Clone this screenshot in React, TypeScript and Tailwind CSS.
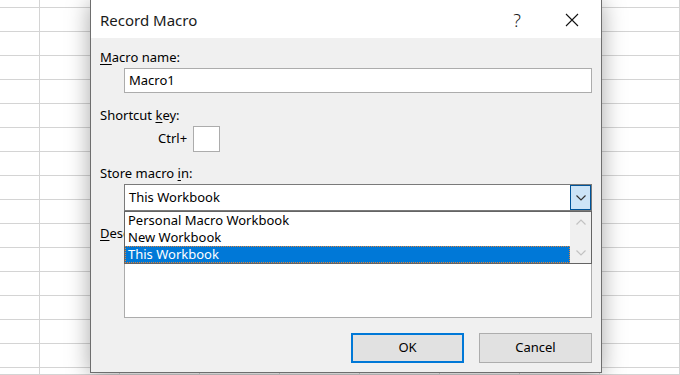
import React from "react";

const COLS = [40, 80, 80, 80, 80, 80, 80, 80, 80];
const ROWS = [8, ...Array.from({ length: 15 }, () => 24), 7];

const font = "font-['Segoe_UI','Noto_Sans',sans-serif]";

function Sheet() {
  return (
    <div className="flex flex-col">
      {ROWS.map((h, r) => (
        <div key={r} className="flex" style={{ height: h }}>
          {COLS.map((w, c) => (
            <div
              key={c}
              className="shrink-0 border-r border-b border-[#d4d4d4] bg-white"
              style={{ width: w }}
            />
          ))}
        </div>
      ))}
    </div>
  );
}

function Chevron({ up = false, color }: { up?: boolean; color: string }) {
  return (
    <svg width="10" height="6" viewBox="0 0 10 6" className="block">
      <path
        d={up ? "M0.5 5.5 L5 1 L9.5 5.5" : "M0.5 0.5 L5 5 L9.5 0.5"}
        fill="none"
        stroke={color}
        strokeWidth="1.2"
      />
    </svg>
  );
}

function Label({ children }: { children: React.ReactNode }) {
  return <div className="h-[18px] leading-[18px] text-[13px] text-black">{children}</div>;
}

function DropList() {
  const items = ["Personal Macro Workbook", "New Workbook", "This Workbook"];
  return (
    <div className="absolute left-[-1px] top-[26px] z-10 flex w-[468px] border border-[#646464] bg-white">
      <div className="flex flex-1 flex-col">
        {items.map((it, i) => (
          <div
            key={it}
            className={
              i === 2
                ? "h-[17px] border border-dotted border-[#e0843a] bg-[#0078d7] pl-[2px] text-[13px] leading-[15px] text-white"
                : "h-[17px] pl-[3px] text-[13px] leading-[17px] text-black"
            }
          >
            {it}
          </div>
        ))}
      </div>
      <div className="flex w-[21px] flex-col items-center justify-between bg-[#f0f0f0] pb-[7px] pt-[7px]">
        <Chevron up color="#c2c2c2" />
        <Chevron color="#c2c2c2" />
      </div>
    </div>
  );
}

function Dialog() {
  return (
    <div
      className={`absolute left-[90px] top-0 flex h-[373px] w-[512px] flex-col border-x border-b border-[#6e6e6e] bg-[#f0f0f0] shadow-[0_2px_22px_rgba(0,0,0,0.35)] ${font}`}
    >
      <div className="flex h-[38px] items-center bg-white pl-[9px] pt-[2px]">
        <div className="flex-1 text-[15px] text-[#1a1a1a]">Record Macro</div>
        <div className="w-[20px] text-center text-[18px] font-light text-[#1a1a1a]">?</div>
        <div className="ml-[38px] mr-[22px] flex w-[14px] justify-center">
          <svg width="14" height="14" viewBox="0 0 14 14">
            <path d="M1 1 L13 13 M13 1 L1 13" stroke="#111" strokeWidth="1.1" />
          </svg>
        </div>
      </div>

      <div className="flex flex-1 flex-col pl-[9px] pr-[9px]">
        <div className="mt-[10px]">
          <Label>
            <span className="underline underline-offset-2">M</span>acro name:
          </Label>
        </div>
        <div className="ml-[24px] mt-[2px] flex h-[25px] items-center border border-[#acacac] bg-white pl-[4px] text-[13px]">
          Macro1
        </div>

        <div className="mt-[13px]">
          <Label>
            Shortcut <span className="underline underline-offset-2">k</span>ey:
          </Label>
        </div>
        <div className="ml-[58px] mt-[2px] flex h-[26px] items-center gap-[6px]">
          <span className="text-[13px] text-black">Ctrl+</span>
          <div className="h-[26px] w-[27px] border border-[#acacac] bg-white" />
        </div>

        <div className="mt-[12px]">
          <Label>
            Store macro <span className="underline underline-offset-2">i</span>n:
          </Label>
        </div>
        <div className="relative ml-[24px] mt-[2px] flex h-[27px] items-stretch border border-[#7a7a7a] bg-white">
          <div className="flex flex-1 items-center pl-[4px] text-[13px] text-black">This Workbook</div>
          <div className="flex w-[21px] items-center justify-center border border-[#005499] bg-[#cce4f7]">
            <Chevron color="#333" />
          </div>
          <DropList />
        </div>

        <div className="mt-[13px]">
          <Label>
            <span className="underline underline-offset-2">D</span>escription:
          </Label>
        </div>
        <div className="ml-[24px] mt-[3px] h-[73px] border border-[#acacac] bg-white" />

        <div className="mt-[15px] flex justify-end gap-[15px]">
          <button className="h-[30px] w-[113px] border-2 border-[#0078d7] bg-[#e1e1e1] text-[13px] text-black">
            OK
          </button>
          <button className="h-[30px] w-[113px] border border-[#adadad] bg-[#e1e1e1] text-[13px] text-black">
            Cancel
          </button>
        </div>
      </div>
    </div>
  );
}

export default function App() {
  return (
    <div className="relative h-[375px] w-[680px] overflow-hidden bg-white">
      <Sheet />
      <Dialog />
    </div>
  );
}
